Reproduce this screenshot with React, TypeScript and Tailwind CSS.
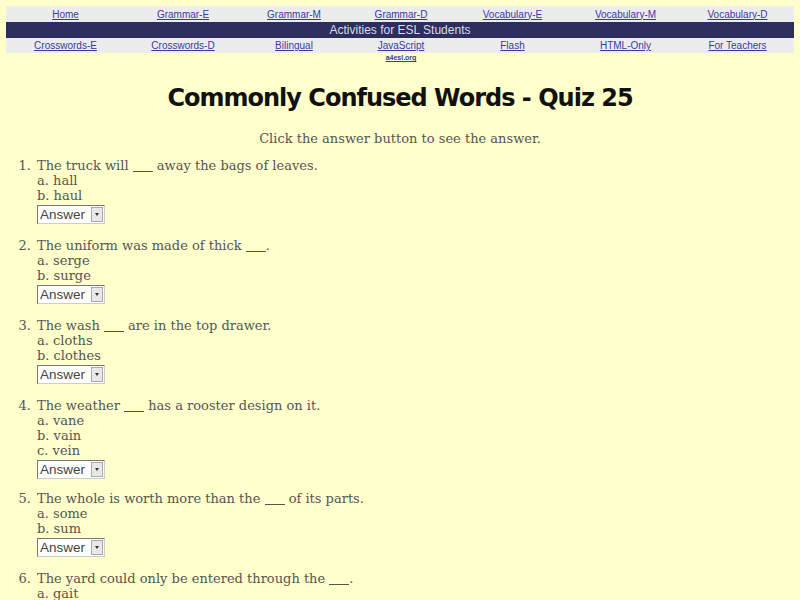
import React from 'react';

const topLinks = ['Home', 'Grammar-E', 'Grammar-M', 'Grammar-D', 'Vocabulary-E', 'Vocabulary-M', 'Vocabulary-D'];
const bottomLinks = ['Crosswords-E', 'Crosswords-D', 'Bilingual', 'JavaScript', 'Flash', 'HTML-Only', 'For Teachers'];

const questions = [
  { q: 'The truck will ___ away the bags of leaves.', opts: ['a. hall', 'b. haul'] },
  { q: 'The uniform was made of thick ___.', opts: ['a. serge', 'b. surge'] },
  { q: 'The wash ___ are in the top drawer.', opts: ['a. cloths', 'b. clothes'] },
  { q: 'The weather ___ has a rooster design on it.', opts: ['a. vane', 'b. vain', 'c. vein'] },
  { q: 'The whole is worth more than the ___ of its parts.', opts: ['a. some', 'b. sum'] },
  { q: 'The yard could only be entered through the ___.', opts: ['a. gait', 'b. gate'] },
];

function Blank({ text }: { text: string }) {
  const parts = text.split('___');
  return (
    <>
      {parts[0]}
      <span className="inline-block w-[20px] border-b border-[#555] align-baseline translate-y-[2px]"></span>
      {parts[1]}
    </>
  );
}

function AnswerBox() {
  return (
    <div className="mt-[2px] flex h-[19px] w-[68px] items-center border border-t-[#777] border-l-[#777] border-b-[#ccc] border-r-[#ccc] bg-white pl-[2px] font-['Liberation_Sans',sans-serif] text-[13.5px] text-[#444]">
      <span className="flex-1 leading-none">Answer</span>
      <span className="mr-[1px] flex h-[15px] w-[12px] items-center justify-center border border-[#aaa] bg-[#e8e8e8]">
        <span className="block h-0 w-0 border-x-[2.5px] border-t-[3px] border-x-transparent border-t-[#333]"></span>
      </span>
    </div>
  );
}

export default function App() {
  return (
    <div className="min-h-[600px] w-[800px] overflow-hidden bg-[#ffffcc] pt-[6px]">
      <div className="mx-[6px] font-['Liberation_Sans',sans-serif] text-[10px]">
        <div className="grid h-[16px] grid-cols-[119px_116px_106px_108px_115px_111px_113px] items-center bg-[#ececec]">
          {topLinks.map((l) => (
            <a key={l} className="text-center text-[#3a3aa0] underline">{l}</a>
          ))}
        </div>
        <div className="flex h-[16px] items-center justify-center bg-[#2d2d5e] text-[12px] text-[#dcdce8]">
          Activities for ESL Students
        </div>
        <div className="grid h-[15px] grid-cols-[119px_116px_106px_108px_115px_111px_113px] items-center bg-[#ececec]">
          {bottomLinks.map((l) => (
            <a key={l} className="text-center text-[#3a3aa0] underline">{l}</a>
          ))}
        </div>
        <div className="grid grid-cols-[119px_116px_106px_108px_115px_111px_113px]">
          <span></span><span></span><span></span>
          <a className="text-center text-[7px] font-bold leading-[10px] text-[#3a3aa0] underline">a4esl.org</a>
        </div>
      </div>

      <h1 className="mt-[20px] text-center font-['Comic_Sans_MS','DejaVu_Sans',sans-serif] text-[24px] font-bold leading-[30px] tracking-[-1px] text-[#111]">
        Commonly Confused Words - Quiz 25
      </h1>

      <div className="font-['DejaVu_Serif',serif] text-[13px] leading-[15px] text-[#555]">
        <p className="mt-[18px] text-center">Click the answer button to see the answer.</p>

        <ol className="mt-[12px]">
          {questions.map((item, i) => (
            <li key={i} className={item.opts.length > 2 ? 'mb-[12px] flex' : 'mb-[14px] flex'}>
              <span className="w-[31px] text-right">{i + 1}.</span>
              <div className="pl-[6px]">
                <div><Blank text={item.q} /></div>
                {item.opts.map((o) => (
                  <div key={o}>{o}</div>
                ))}
                <AnswerBox />
              </div>
            </li>
          ))}
        </ol>
      </div>
    </div>
  );
}
